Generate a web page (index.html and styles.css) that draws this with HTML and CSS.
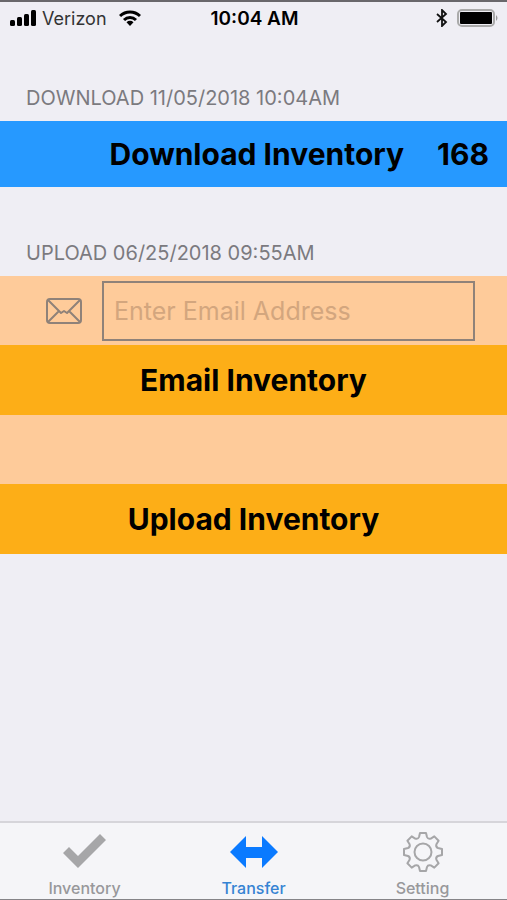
FILE: index.html
```html
<!DOCTYPE html>
<html lang="en">
<head>
    <meta charset="UTF-8">
    <meta name="viewport" content="width=device-width, initial-scale=1.0">
    <title>Transfer</title>
    <link rel="stylesheet" href="styles.css">
</head>
<body>
    <header class="status-bar">
        <div class="carrier">
            <svg width="27" height="16" viewBox="0 0 27 16" aria-hidden="true">
                <rect x="0" y="10" width="5" height="6" rx="1.5"/>
                <rect x="7" y="7" width="5" height="9" rx="1.5"/>
                <rect x="14" y="4" width="5" height="12" rx="1.5"/>
                <rect x="21" y="0" width="5" height="16" rx="1.5"/>
            </svg>
            <span>Verizon</span>
            <svg width="22" height="16" viewBox="0 0 22 16" fill="none" stroke="#000" stroke-width="3" aria-hidden="true">
                <path d="M1 6a14.5 14.5 0 0 1 20 0"/>
                <path d="M5 10a8.7 8.7 0 0 1 12 0"/>
                <path d="M7.5 12.3a5 5 0 0 1 7 0L11 16z" fill="#000" stroke="none"/>
            </svg>
        </div>
        <div class="time">10:04 AM</div>
        <div class="power">
            <svg width="12" height="18" viewBox="0 0 12 18" fill="none" stroke="#111" stroke-width="1.8" aria-hidden="true">
                <path d="M1 5l9 8-4 4V1l4 4-9 8"/>
            </svg>
            <svg width="42" height="18" viewBox="0 0 42 18" aria-hidden="true">
                <rect x="1" y="1" width="36" height="16" rx="4" fill="none" stroke="#aaa" stroke-width="2"/>
                <rect x="3" y="3" width="32" height="12" rx="1"/>
                <path d="M39 6q3 3 0 6z" fill="#999"/>
            </svg>
        </div>
    </header>

    <main>
        <h2 class="section-title">DOWNLOAD 11/05/2018 10:04AM</h2>
        <button class="row download" type="button">
            <span>Download Inventory</span>
            <span>168</span>
        </button>

        <h2 class="section-title">UPLOAD 06/25/2018 09:55AM</h2>
        <div class="email-row">
            <label for="email" aria-label="Email address">
                <svg width="36" height="26" viewBox="0 0 36 26" fill="none" stroke="#8f8279" stroke-width="2" stroke-linejoin="round">
                    <rect x="1" y="1" width="34" height="24" rx="3"/>
                    <path d="M2 2l13 13 3-2 3 2L34 2M2 24l11-11M34 24L23 13"/>
                </svg>
            </label>
            <input type="email" id="email" placeholder="Enter Email Address">
        </div>
        <button class="row upload" type="button">Email Inventory</button>
        <div class="spacer"></div>
        <button class="row upload" type="button">Upload Inventory</button>
    </main>

    <nav class="tab-bar">
        <a href="#inventory">
            <svg width="44" height="42" viewBox="0 0 44 42" aria-hidden="true">
                <path d="M0 22l6-6 9 9L37 3l6 6-28 28z" fill="#a6a6a8"/>
            </svg>
            Inventory
        </a>
        <a href="#transfer" class="active" aria-current="page">
            <svg width="48" height="42" viewBox="0 0 48 42" aria-hidden="true">
                <path d="M0 21L16 5v11h16V5l16 16-16 16V27H16v10z" fill="#0a7aff"/>
            </svg>
            Transfer
        </a>
        <a href="#setting">
            <svg width="42" height="42" viewBox="-21 -21 42 42" fill="none" stroke="#a6a6a8" stroke-width="2" stroke-linejoin="round" aria-hidden="true">
                <path d="M-4-15L-3-19H3L4-15Q5-12.5 7.8-13.4L11.3-15.6L15.6-11.3L13.4-7.8Q12.5-5 15-4L19-3V3L15 4Q12.5 5 13.4 7.8L15.6 11.3L11.3 15.6L7.8 13.4Q5 12.5 4 15L3 19H-3L-4 15Q-5 12.5-7.8 13.4L-11.3 15.6L-15.6 11.3L-13.4 7.8Q-12.5 5-15 4L-19 3V-3L-15-4Q-12.5-5-13.4-7.8L-15.6-11.3L-11.3-15.6L-7.8-13.4Q-5-12.5-4-15z"/>
                <circle r="8.5"/>
            </svg>
            Setting
        </a>
    </nav>
</body>
</html>
```
FILE: styles.css
```css
* {
    box-sizing: border-box;
}
body {
    margin: 0;
    min-height: 100vh;
    display: flex;
    flex-direction: column;
    background-color: #efeef4;
    border-top: 2px solid #69676b;
    border-bottom: 1px solid #858488;
    font-family: Inter, "Liberation Sans", sans-serif;
    color: #000;
}
svg {
    display: block;
}
main {
    flex: 1;
}
.status-bar {
    display: grid;
    grid-template-columns: 1fr auto 1fr;
    align-items: center;
    height: 30px;
    padding: 2px 8px 0 10px;
    font-size: 18px;
}
.carrier,
.power {
    display: flex;
    align-items: center;
}
.carrier {
    gap: 5px;
    color: #333;
}
.carrier svg:last-child {
    margin-left: 7px;
}
.time {
    font-size: 19px;
    font-weight: 600;
}
.power {
    justify-content: flex-end;
    gap: 9px;
}
.section-title {
    margin: 0;
    padding: 54px 26px 11px;
    font-size: 20px;
    line-height: 24px;
    font-weight: 400;
    color: #7b7a7f;
}
.row {
    display: block;
    width: 100%;
    height: 70px;
    padding: 0 18px;
    border: none;
    font-family: inherit;
    font-size: 30px;
    font-weight: 700;
    color: #000;
    cursor: pointer;
}
.download {
    display: flex;
    justify-content: flex-end;
    align-items: center;
    gap: 33px;
    height: 66px;
    background-color: #2699ff;
}
.upload {
    background-color: #fdae17;
}
.email-row {
    display: flex;
    align-items: center;
    gap: 20px;
    height: 69px;
    padding: 0 32px 0 46px;
    background-color: #fecb9a;
}
.email-row input {
    flex: 1;
    min-width: 0;
    height: 60px;
    padding: 0 10px;
    border: 2px solid #8f8279;
    border-radius: 0;
    background: none;
    font-family: inherit;
    font-size: 25px;
}
.email-row input::placeholder {
    color: #d3a67e;
    opacity: 1;
}
.spacer {
    height: 69px;
    background-color: #fecb9a;
}
.tab-bar {
    display: flex;
    height: 78px;
    border-top: 2px solid #d6d5da;
    background-color: #f5f5f8;
}
.tab-bar a {
    flex: 1;
    display: flex;
    flex-direction: column;
    align-items: center;
    gap: 6px;
    padding-top: 8px;
    font-size: 16px;
    line-height: 18px;
    font-weight: 500;
    color: #98989b;
    text-decoration: none;
}
.tab-bar .active {
    color: #3583d3;
}
```
